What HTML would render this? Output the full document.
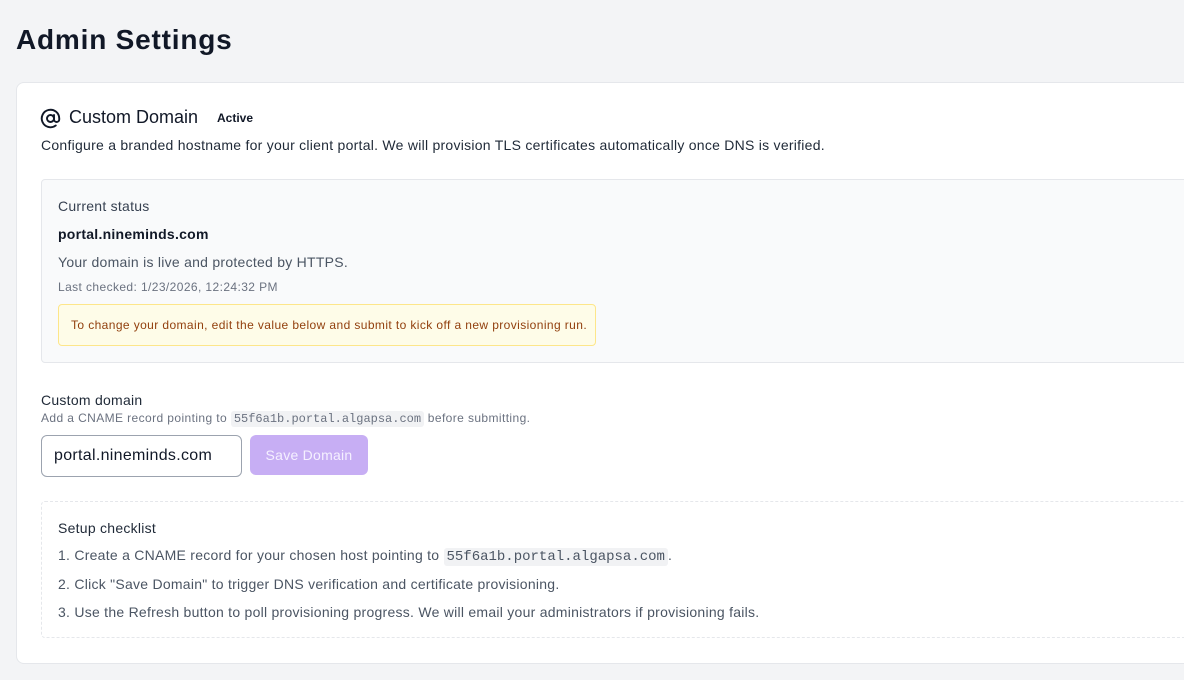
<!DOCTYPE html>
<html><head><style>
*{box-sizing:border-box;margin:0;padding:0}
body{width:1184px;height:680px;overflow:hidden;background:#f3f4f6;font-family:"Liberation Sans",sans-serif;color:#1f2937;position:relative}
.a{position:absolute;white-space:nowrap}
.s{letter-spacing:0.26px}
.x{letter-spacing:0.4px}
code{font-family:"Liberation Mono",monospace;background:#f1f2f4;border-radius:3px;padding:1px 3px;letter-spacing:0}
</style></head><body>
<div class="a" style="left:16px;top:24px;font-size:28px;font-weight:bold;color:#111827;letter-spacing:0.8px">Admin Settings</div>
<div class="a" style="left:16px;top:82px;width:1200px;height:582px;background:#fff;border:1px solid #e5e7eb;border-radius:8px"></div>
<svg class="a" style="left:40px;top:108px" width="21" height="21" viewBox="0 0 24 24" fill="none" stroke="#111827" stroke-width="2.2" stroke-linecap="round"><circle cx="12" cy="12" r="4"/><path d="M16 8v5a3 3 0 0 0 6 0v-1a10 10 0 1 0-4 8"/></svg>
<div class="a" style="left:69px;top:107px;font-size:18px;color:#111827">Custom Domain</div>
<div class="a" style="left:217px;top:111px;font-size:12px;font-weight:bold;color:#111827">Active</div>
<div class="a s" style="left:41px;top:137px;font-size:14px;color:#1f2937">Configure a branded hostname for your client portal. We will provision TLS certificates automatically once DNS is verified.</div>
<div class="a" style="left:41px;top:179px;width:1200px;height:184px;background:#f9fafb;border:1px solid #e5e7eb;border-radius:4px"></div>
<div class="a s" style="left:58px;top:198px;font-size:14px;color:#374151">Current status</div>
<div class="a s" style="left:58px;top:226px;font-size:14px;font-weight:bold;color:#111827">portal.nineminds.com</div>
<div class="a s" style="left:58px;top:254px;font-size:14px;color:#4b5563">Your domain is live and protected by HTTPS.</div>
<div class="a x" style="left:58px;top:280px;font-size:12px;color:#6b7280">Last checked: 1/23/2026, 12:24:32 PM</div>
<div class="a x" style="left:58px;top:304px;width:538px;height:42px;background:#fefce8;border:1px solid #fde68a;border-radius:4px;font-size:12px;color:#92400e;padding:13px 0 0 12px">To change your domain, edit the value below and submit to kick off a new provisioning run.</div>
<div class="a s" style="left:41px;top:392px;font-size:14px;color:#1f2937">Custom domain</div>
<div class="a x" style="left:41px;top:411px;font-size:12px;color:#6b7280">Add a CNAME record pointing to <code>55f6a1b.portal.algapsa.com</code> before submitting.</div>
<div class="a" style="left:41px;top:435px;width:201px;height:42px;border:1px solid #9ca3af;border-radius:6px;font-size:16px;color:#111827;padding:11px 0 0 12px;letter-spacing:0.3px">portal.nineminds.com</div>
<div class="a s" style="left:250px;top:435px;width:118px;height:40px;background:#c7aef4;border-radius:6px;font-size:14px;color:#f5f0ff;text-align:center;line-height:40px">Save Domain</div>
<div class="a" style="left:41px;top:501px;width:1200px;height:137px;border:1px dashed #e5e7eb;border-radius:4px"></div>
<div class="a s" style="left:58px;top:520px;font-size:14px;color:#1f2937">Setup checklist</div>
<div class="a s" style="left:58px;top:547px;font-size:14px;color:#4b5563">1. Create a CNAME record for your chosen host pointing to <code>55f6a1b.portal.algapsa.com</code>.</div>
<div class="a s" style="left:58px;top:576px;font-size:14px;color:#4b5563">2. Click "Save Domain" to trigger DNS verification and certificate provisioning.</div>
<div class="a s" style="left:58px;top:604px;font-size:14px;color:#4b5563">3. Use the Refresh button to poll provisioning progress. We will email your administrators if provisioning fails.</div>
</body></html>
